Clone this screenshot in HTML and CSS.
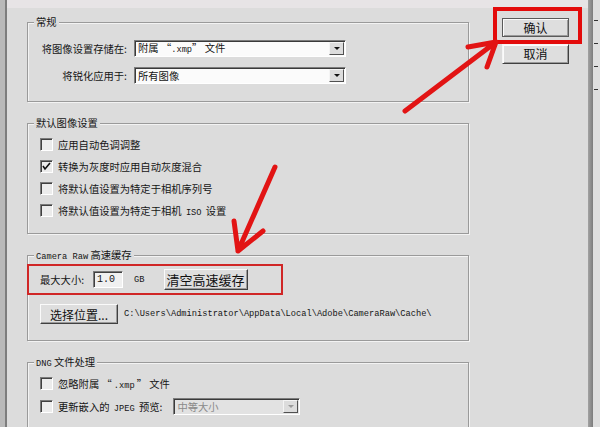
FILE: index.html
```html
<!DOCTYPE html>
<html lang="zh-CN">
<head>
    <meta charset="UTF-8">
    <title>Camera Raw 首选项</title>
    <link rel="stylesheet" href="styles.css">
</head>
<body>
    <div class="window">
        <div class="edge"></div>

        <div class="panel">
            <fieldset class="group group-general">
                <legend>常规</legend>
                <div class="form-grid">
                    <label>将图像设置存储在:</label>
                    <div class="select"><span class="value">附属 “<span class="en">.xmp</span>” 文件</span><span class="drop"></span></div>
                    <label>将锐化应用于:</label>
                    <div class="select"><span class="value">所有图像</span><span class="drop"></span></div>
                </div>
            </fieldset>

            <fieldset class="group group-defaults">
                <legend>默认图像设置</legend>
                <div class="check"><span class="box"></span><span>应用自动色调调整</span></div>
                <div class="check"><span class="box on"><svg width="9" height="9" viewBox="0 0 9 9"><polyline points="1,4 3,7 8,1" fill="none" stroke="#111" stroke-width="1.6"/></svg></span><span>转换为灰度时应用自动灰度混合</span></div>
                <div class="check"><span class="box"></span><span>将默认值设置为特定于相机序列号</span></div>
                <div class="check"><span class="box"></span><span>将默认值设置为特定于相机 <span class="en">ISO</span> 设置</span></div>
            </fieldset>

            <fieldset class="group group-cache">
                <legend><span class="en">Camera Raw</span> 高速缓存</legend>
                <div class="cache-row">
                    <span>最大大小:</span>
                    <span class="field en">1.0</span>
                    <span class="en unit">GB</span>
                    <button class="btn btn-purge">清空高速缓存</button>
                </div>
                <div class="path-row">
                    <button class="btn btn-pick">选择位置...</button>
                    <span class="en path">C:\Users\Administrator\AppData\Local\Adobe\CameraRaw\Cache\</span>
                </div>
            </fieldset>

            <fieldset class="group group-dng">
                <legend><span class="en">DNG</span> 文件处理</legend>
                <div class="check"><span class="box"></span><span>忽略附属 “<span class="en">.xmp</span>” 文件</span></div>
                <div class="check check-select"><span class="box"></span><span>更新嵌入的 <span class="en">JPEG</span> 预览:</span>
                    <div class="select select-off"><span class="value">中等大小</span><span class="drop"></span></div>
                </div>
            </fieldset>
        </div>

        <div class="actions">
            <div class="mark">
                <button class="btn btn-dialog">确认</button>
            </div>
            <button class="btn btn-dialog btn-cancel">取消</button>
        </div>

        <div class="rail"></div>
        <div class="ruler"><i></i><i></i><i></i><i></i></div>

        <!-- hand-drawn annotation arrows -->
        <svg class="annot" width="600" height="427" viewBox="0 0 600 427">
            <g fill="none" stroke="#e21414" stroke-width="5" stroke-linecap="round" stroke-linejoin="round">
                <path d="M405 111 L496 42 M468 47 L496 42 L487 67"/>
                <path d="M275 167 L238 251 M234 221 L238 251 L263 231"/>
            </g>
        </svg>
    </div>
</body>
</html>
```

FILE: styles.css
```css
* {
    box-sizing: border-box;
}

body {
    margin: 0;
    height: 427px;
    overflow: hidden;
    background: linear-gradient(#e7e4e6 0, #e7e4e6 8px, #dcdcdc 8px);
    font-family: "Noto Sans CJK SC", sans-serif;
    font-size: 10.3px;
    color: #151515;
}

.en {
    font-family: "Liberation Mono", monospace;
    font-size: 8.7px;
}

.window {
    position: relative;
    display: flex;
    height: 427px;
}

.edge {
    flex: none;
    width: 7px;
    background: #b9b9b9;
    border-right: 2px solid #7d7d7d;
}

.panel {
    flex: none;
    width: 462px;
    padding: 15px 0 0 20px;
}

/* group boxes */
.group {
    margin: 0;
    width: 442px;
    padding: 11px 0 16px 12px;
    border: 1px solid #9a9a9a;
    box-shadow: inset 1px 1px 0 #f3f3f3, 1px 1px 0 #f3f3f3;
}

.group + .group {
    margin-top: 14px;
}

.group legend {
    height: 14px;
    margin-left: -6px;
    padding: 0 2px;
    line-height: 14px;
    white-space: nowrap;
    background: #dcdcdc;
}

.group-general {
    padding-bottom: 17px;
}

.group-defaults {
    padding-top: 3px;
    padding-bottom: 12px;
}

.group-cache {
    padding-top: 2px;
    padding-bottom: 16px;
}

.group-dng {
    padding-top: 3px;
    padding-bottom: 40px;
}

.form-grid {
    display: grid;
    grid-template-columns: 87px 212px;
    column-gap: 7px;
    row-gap: 10px;
    align-items: center;
}

.form-grid label {
    text-align: right;
    white-space: nowrap;
    line-height: 17px;
}

/* combo boxes */
.select {
    display: flex;
    align-items: center;
    height: 17px;
    padding-left: 3px;
    background: #fbfbfb;
    border: 1px solid;
    border-color: #7c7c7c #fff #fff #7c7c7c;
    box-shadow: inset 1px 1px 0 #3a3a3a;
    white-space: nowrap;
}

.select .value {
    flex: 1;
    line-height: 14px;
}

.drop {
    display: flex;
    align-items: center;
    justify-content: center;
    width: 15px;
    height: 13px;
    margin-right: 1px;
    background: #dcdcdc;
    border: 1px solid;
    border-color: #f4f4f4 #505050 #505050 #f4f4f4;
}

.drop::after {
    content: "";
    border-left: 3px solid transparent;
    border-right: 3px solid transparent;
    border-top: 3px solid #111;
}

.select-off {
    width: 127px;
    margin-left: 11px;
    background: #e2e2e2;
    color: #8a8a8a;
}

.select-off .drop::after {
    border-top-color: #9a9a9a;
}

/* check boxes */
.check {
    display: flex;
    align-items: center;
    height: 22px;
    white-space: nowrap;
}

.box {
    display: flex;
    align-items: center;
    justify-content: center;
    flex: none;
    width: 13px;
    height: 13px;
    margin-right: 5px;
    background: #ececec;
    border: 1px solid;
    border-color: #7a7a7a #fff #fff #7a7a7a;
    box-shadow: inset 1px 1px 0 #404040;
}

.check .en {
    margin: 0 2px;
}

.check-select {
    height: 25px;
}

/* buttons */
.btn {
    font: inherit;
    color: #111;
    padding: 0;
    background: #dedede;
    border: 1px solid;
    border-color: #fafafa #404040 #404040 #fafafa;
    box-shadow: inset -1px -1px 0 #9a9a9a;
    white-space: nowrap;
    cursor: pointer;
}

.cache-row {
    display: flex;
    align-items: center;
    width: 256px;
    height: 31px;
    margin-left: -13px;
    padding-left: 11px;
    border: 2px solid #d02626;
    white-space: nowrap;
}

.field {
    display: flex;
    align-items: center;
    width: 30px;
    height: 17px;
    margin-left: 9px;
    padding-left: 3px;
    font-size: 10px;
    background: #f0f0f0;
    border: 1px solid;
    border-color: #7a7a7a #fff #fff #7a7a7a;
    box-shadow: inset 1px 1px 0 #404040;
}

.unit {
    margin-left: 11px;
}

.btn-purge {
    width: 84px;
    height: 21px;
    margin-left: 19px;
    font-size: 13px;
    line-height: 18px;
}

.path-row {
    display: flex;
    align-items: center;
    margin-top: 9px;
    white-space: nowrap;
}

.btn-pick {
    width: 78px;
    height: 20px;
    font-size: 12px;
    line-height: 17px;
}

.path {
    margin-left: 6px;
}

/* dialog buttons */
.actions {
    flex: none;
    width: 89px;
    margin-left: 24px;
    padding-top: 7px;
}

.mark {
    padding: 7px 9px 3px 5px;
    border: 4px solid #e30b0b;
}

.btn-dialog {
    display: block;
    width: 67px;
    height: 19px;
    font-size: 12px;
    line-height: 16px;
    border-color: #5a5a5a;
    box-shadow: inset 1px 1px 0 #fbfbfb, inset -1px -1px 0 #9a9a9a;
}

.btn-cancel {
    height: 20px;
    margin-left: 9px;
    border-color: #f5f5f5 #404040 #404040 #f5f5f5;
}

.rail {
    flex: none;
    width: 5px;
    margin-left: auto;
    background: linear-gradient(90deg, #a2a2a2, #7c7c7c);
}

.ruler {
    flex: none;
    display: flex;
    flex-direction: column;
    gap: 22px;
    width: 7px;
    padding: 20px 0 0 1px;
    background: #dedede;
}

.ruler i {
    display: block;
    width: 4px;
    height: 1px;
    background: #333;
}

.annot {
    position: absolute;
    top: 0;
    left: 0;
    pointer-events: none;
}
```
